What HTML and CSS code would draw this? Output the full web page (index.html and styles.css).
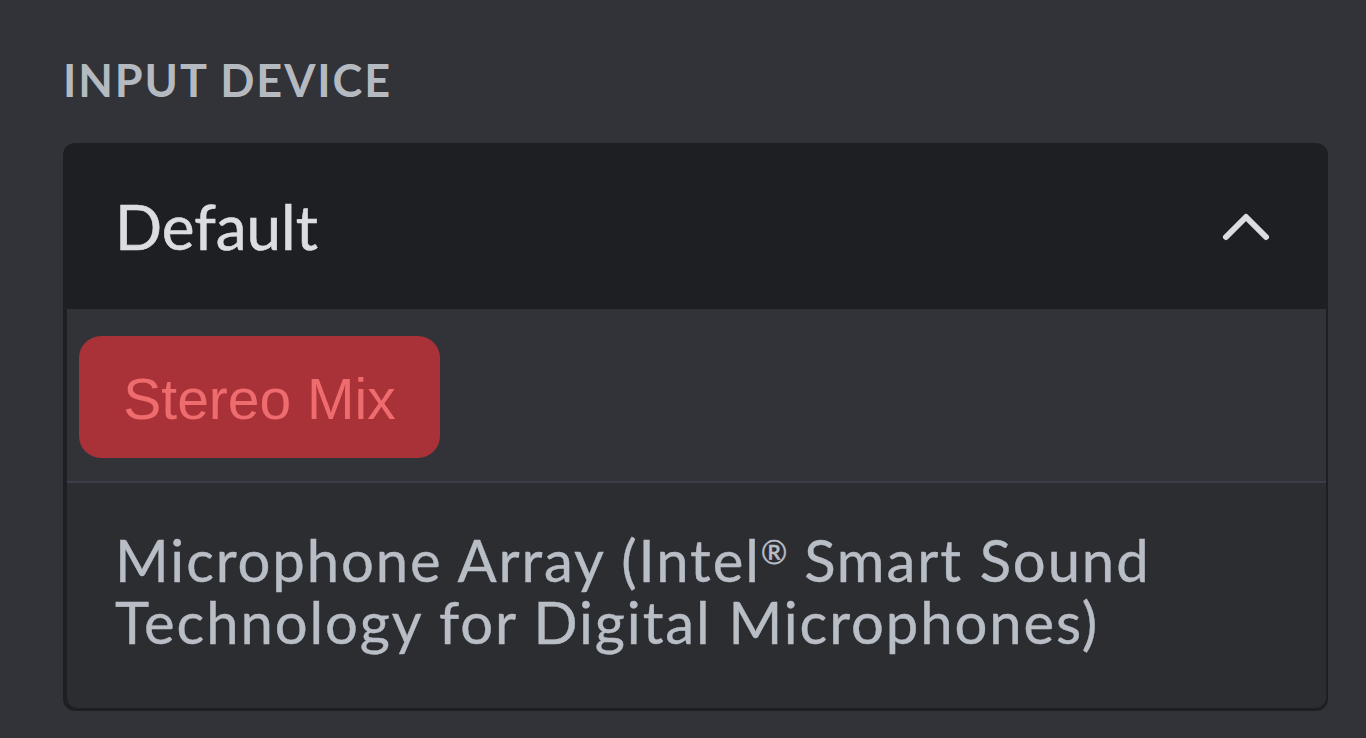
FILE: index.html
```html
<!DOCTYPE html>
<html>
<head>
<meta charset="utf-8">
<link rel="stylesheet" href="styles.css">
</head>
<body>
<div class="page">
  <div class="label">INPUT DEVICE</div>
  <div class="select">
    <div class="select-head">
      <span class="value">Default</span>
      <svg class="chev" width="50" height="34" viewBox="0 0 50 34"><path d="M5 28 L25 8 L45 28" fill="none" stroke="#dbdee1" stroke-width="6" stroke-linecap="round" stroke-linejoin="round"/></svg>
    </div>
    <div class="list">
      <div class="opt opt-active">
        <span class="badge">Stereo Mix</span>
      </div>
      <div class="opt opt-2">Microphone Array (Intel<sup class="reg">®</sup> Smart Sound Technology for Digital Microphones)</div>
    </div>
  </div>
</div>
</body>
</html>
```
FILE: styles.css
```css
html, body {
  margin: 0;
  padding: 0;
  background: #313338;
  width: 1366px;
  height: 738px;
  overflow: hidden;
}
.page {
  padding: 52px 38px 0 63px;
  font-family: Lato, "Noto Sans", sans-serif;
}
.label {
  font-size: 45px;
  font-weight: 700;
  color: #b5bac1;
  line-height: 56px;
  letter-spacing: 1.9px;
  margin-bottom: 35px;
}
.select {
  width: 1265px;
  background: #1e1f22;
  border-radius: 12px;
  padding-bottom: 3px;
}
.select-head {
  height: 166px;
  display: flex;
  align-items: center;
  justify-content: space-between;
  padding: 0 57px 0 52px;
  box-sizing: border-box;
}
.value {
  font-size: 62px;
  color: #dbdee1;
  font-weight: 400;
  -webkit-text-stroke: 0.6px #dbdee1;
}
.chev {
  display: block;
}
.list {
  margin: 0 2px 0 4px;
  background: #2b2d31;
  border-radius: 0 0 10px 10px;
  overflow: hidden;
}
.opt-active {
  background: #323339;
  height: 174px;
  padding: 27px 0 0 12px;
  box-sizing: border-box;
  border-bottom: 2px solid #3c3f4a;
}
.badge {
  display: inline-flex;
  align-items: center;
  justify-content: center;
  width: 361px;
  height: 122px;
  padding-top: 4px;
  box-sizing: border-box;
  background: #a83237;
  border-radius: 22px;
  font-family: "Liberation Sans", Arial, sans-serif;
  font-size: 57px;
  color: #ee6b6e;
}
.opt-2 {
  height: 225px;
  padding: 46px 100px 0 48px;
  box-sizing: border-box;
  font-size: 58px;
  line-height: 62px;
  letter-spacing: 1.9px;
  color: #b9bec6;
  -webkit-text-stroke: 0.4px #b9bec6;
}
.reg {
  font-size: 32px;
  line-height: 0;
  vertical-align: 18px;
  letter-spacing: 0;
}
```
